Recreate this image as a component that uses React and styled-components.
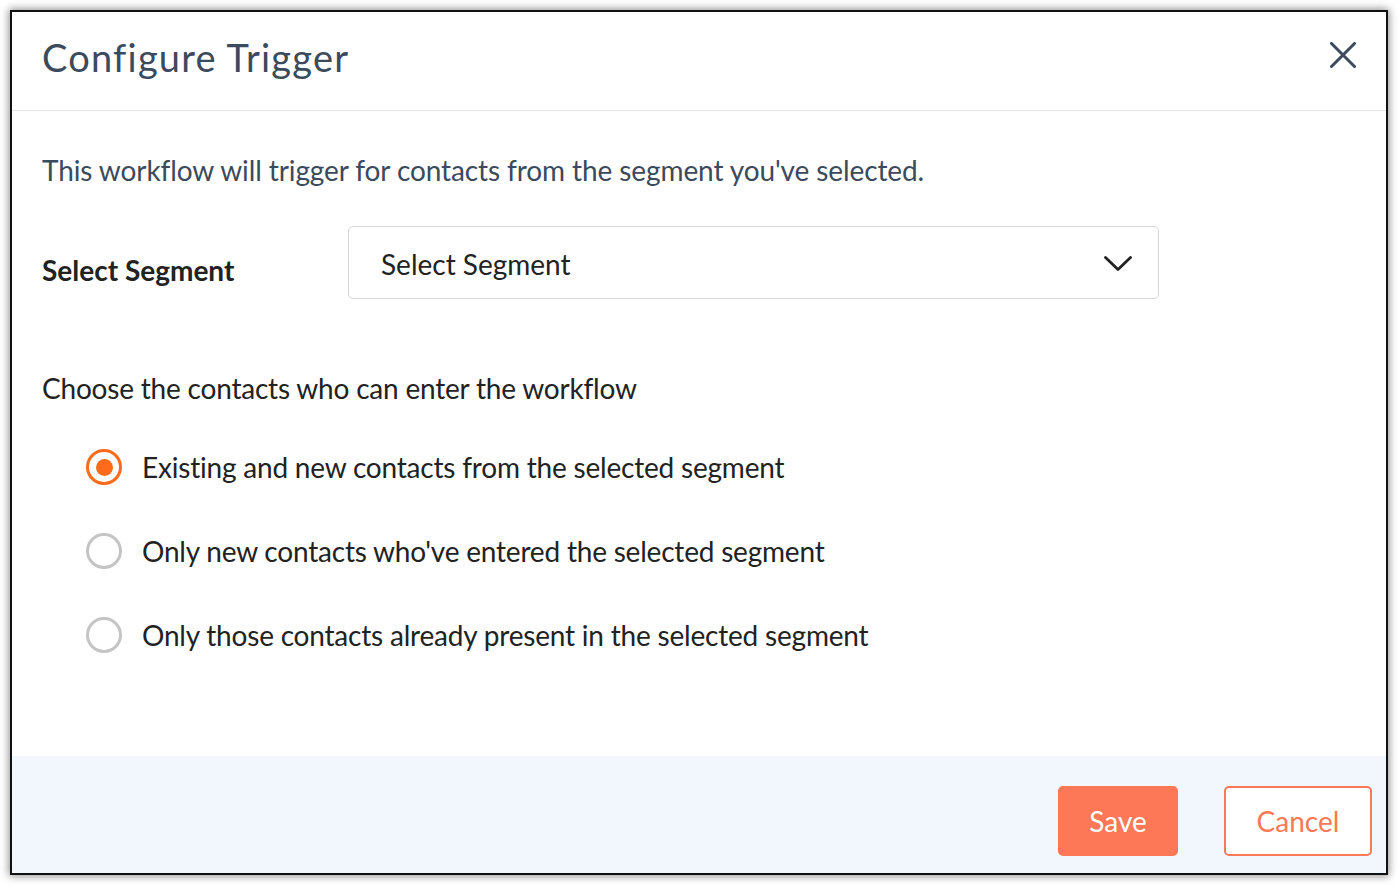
import React, { useState } from "react"
import styled, { createGlobalStyle } from "styled-components"

const GlobalStyle = createGlobalStyle`
  html, body {
    margin: 0;
    padding: 0;
    background: #ffffff;
    font-family: Lato, "Open Sans", sans-serif;
  }
`

const Frame = styled.div`
  box-sizing: border-box;
  margin: 10px;
  width: 1378px;
  height: 865px;
  border: 2px solid #111;
  box-shadow: 0 0 8px 1px rgba(0, 0, 0, 0.45);
  background: #fff;
  display: flex;
  flex-direction: column;
  overflow: hidden;
`

const Header = styled.header`
  height: 98px;
  flex: none;
  display: flex;
  align-items: center;
  justify-content: space-between;
  padding: 0 30px 0 30px;
  border-bottom: 1px solid #e6e6e6;
`

const Title = styled.h1`
  margin: 0;
  font-size: 38px;
  letter-spacing: 1.2px;
  font-weight: 400;
  color: #3b4a5c;
  padding-bottom: 8px;
`

const CloseButton = styled.button`
  border: 0;
  background: none;
  padding: 0;
  width: 26px;
  height: 26px;
  display: flex;
  cursor: pointer;
  margin-top: -12px;
`

const Body = styled.main`
  flex: 1;
  padding: 0 30px;
`

const Intro = styled.p`
  margin: 42px 0 0;
  font-size: 28px;
  letter-spacing: -0.1px;
  line-height: 34px;
  color: #3b4a5c;
`

const FieldRow = styled.div`
  display: flex;
  align-items: center;
  margin-top: 39px;
`

const Label = styled.label`
  width: 306px;
  flex: none;
  font-size: 28px;
  font-weight: 700;
  color: #222;
  padding-top: 14px;
`

const Dropdown = styled.button`
  box-sizing: border-box;
  width: 811px;
  height: 73px;
  border: 1.5px solid #d6d6d6;
  border-radius: 5px;
  background: #fff;
  display: flex;
  align-items: center;
  justify-content: space-between;
  padding: 2px 26px 0 32px;
  font-family: inherit;
  font-size: 28px;
  color: #222;
  cursor: pointer;
`

const Question = styled.p`
  margin: 72px 0 0;
  font-size: 28px;
  letter-spacing: -0.2px;
  line-height: 34px;
  color: #222;
`

const Options = styled.div`
  display: flex;
  flex-direction: column;
  gap: 48px;
  margin-top: 44px;
  padding-left: 44px;
`

const Option = styled.label`
  display: flex;
  align-items: center;
  gap: 20px;
  font-size: 28px;
  letter-spacing: -0.2px;
  line-height: 36px;
  color: #222;
  cursor: pointer;
`

const Radio = styled.span`
  box-sizing: border-box;
  width: 36px;
  height: 36px;
  flex: none;
  border-radius: 50%;
  border: 3.5px solid ${p => (p.$checked ? "#ff6b1a" : "#c4c4c4")};
  display: flex;
  align-items: center;
  justify-content: center;

  &::after {
    content: "";
    width: 17px;
    height: 17px;
    border-radius: 50%;
    background: #ff6b1a;
    display: ${p => (p.$checked ? "block" : "none")};
  }
`

const Footer = styled.footer`
  height: 117px;
  flex: none;
  box-sizing: border-box;
  background: #f1f7fd;
  display: flex;
  align-items: flex-start;
  justify-content: flex-end;
  gap: 46px;
  padding: 30px 14px 0 0;
`

const Button = styled.button`
  box-sizing: border-box;
  height: 70px;
  width: ${p => p.$width}px;
  border-radius: 5px;
  border: 2px solid #fd7857;
  background: ${p => (p.$primary ? "#fd7857" : "#fff")};
  color: ${p => (p.$primary ? "#fff" : "#fd7857")};
  font-family: inherit;
  font-size: 28px;
  cursor: pointer;
`

const options = [
  "Existing and new contacts from the selected segment",
  "Only new contacts who've entered the selected segment",
  "Only those contacts already present in the selected segment",
]

export default function App() {
  const [selected, setSelected] = useState(0)

  return (
    <>
      <GlobalStyle />
      <Frame>
        <Header>
          <Title>Configure Trigger</Title>
          <CloseButton aria-label="Close">
            <svg width="26" height="26" viewBox="0 0 26 26">
              <path d="M1.5 1.5 L24.5 24.5 M24.5 1.5 L1.5 24.5" stroke="#3b4a5c" strokeWidth="3" strokeLinecap="round" />
            </svg>
          </CloseButton>
        </Header>
        <Body>
          <Intro>This workflow will trigger for contacts from the segment you've selected.</Intro>
          <FieldRow>
            <Label>Select Segment</Label>
            <Dropdown>
              Select Segment
              <svg width="28" height="16" viewBox="0 0 28 16">
                <path d="M1.5 1.5 L14 13.5 L26.5 1.5" fill="none" stroke="#222" strokeWidth="2.8" strokeLinecap="round" strokeLinejoin="round" />
              </svg>
            </Dropdown>
          </FieldRow>
          <Question>Choose the contacts who can enter the workflow</Question>
          <Options>
            {options.map((text, i) => (
              <Option key={text} onClick={() => setSelected(i)}>
                <Radio $checked={selected === i} />
                {text}
              </Option>
            ))}
          </Options>
        </Body>
        <Footer>
          <Button $primary $width={120}>Save</Button>
          <Button $width={148}>Cancel</Button>
        </Footer>
      </Frame>
    </>
  )
}
